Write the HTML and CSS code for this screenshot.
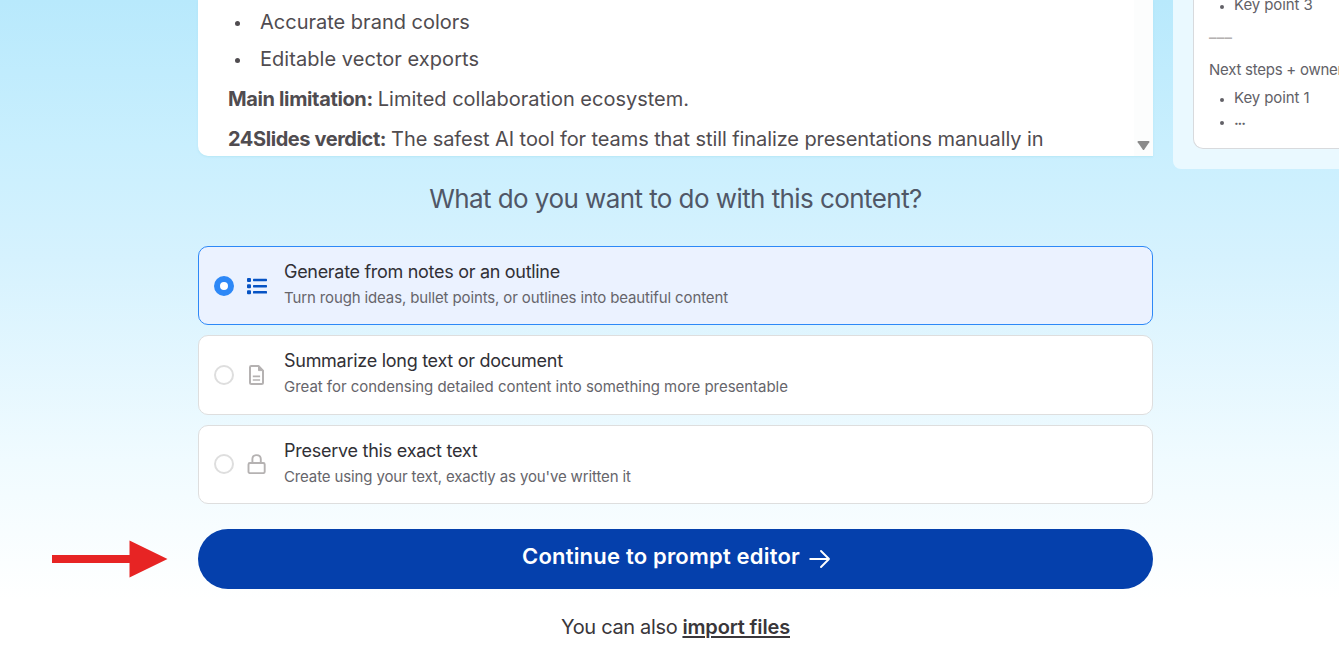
FILE: index.html
```html
<!DOCTYPE html>
<html lang="en">
<head>
<meta charset="utf-8">
<title>Prompt editor</title>
<link rel="stylesheet" href="styles.css">
</head>
<body>
<div class="page">
  <main class="main">
    <section class="editor">
      <div class="editor-text">
        <ul class="points">
          <li>Accurate brand colors</li>
          <li><span class="loose">Editable vector exports</span></li>
        </ul>
        <p><b>Main limitation:</b><span>Limited collaboration ecosystem.</span></p>
        <p class="verdict"><b>24Slides verdict:</b><span>The safest AI tool for teams that still finalize presentations manually in</span></p>
      </div>
      <div class="scrollbar"><svg width="14" height="12" viewBox="0 0 14 12"><path d="M1.500 1h10q1.500 0 .8 1.200L7.300 9.600q-.8 1-1.600 0L.7 2.200Q0 1 1.500 1z" fill="#8b8b8b"/></svg></div>
    </section>
    <h1 class="question">What do you want to do with this content?</h1>
    <div class="options">
      <label class="option selected">
        <span class="radio"></span>
        <svg class="icon" viewBox="0 0 20 20" fill="#0653c4"><rect y="2" width="4" height="4" rx="1"/><rect y="8.200" width="4" height="4" rx="1"/><rect y="14.300" width="4" height="4" rx="1"/><rect x="6" y="2.800" width="14" height="2.400" rx=".6"/><rect x="6" y="9" width="14" height="2.400" rx=".6"/><rect x="6" y="15.100" width="14" height="2.400" rx=".6"/></svg>
        <span class="copy"><span class="title">Generate from notes or an outline</span><span class="desc">Turn rough ideas, bullet points, or outlines into beautiful content</span></span>
      </label>
      <label class="option summarize">
        <span class="radio"></span>
        <svg class="icon" viewBox="0 0 20 20" fill="none" stroke="#b5b2b2" stroke-width="2" stroke-linejoin="round"><path d="M4.300 1H11.500L16 5.600V17.500Q16 19 14.500 19H4.500Q3 19 3 17.500V2.300Q3 1 4.300 1z"/><path d="M11.500 1v4.600H16z" fill="#b5b2b2" stroke-width="1"/><path d="M5.800 11.400h7.300M5.800 15h7.300" stroke-width="1.700"/></svg>
        <span class="copy"><span class="title">Summarize long text or document</span><span class="desc">Great for condensing detailed content into something more presentable</span></span>
      </label>
      <label class="option preserve">
        <span class="radio"></span>
        <svg class="icon" viewBox="0 0 20 20" fill="none" stroke="#b5b2b2" stroke-width="1.900"><rect x="1.500" y="9" width="16.200" height="10.100" rx="1.400"/><path d="M5.400 8.600V5.100Q5.500 1.100 9.600 1.100T13.800 5.100V8.600"/></svg>
        <span class="copy"><span class="title">Preserve this exact text</span><span class="desc">Create using your text, exactly as you've written it</span></span>
      </label>
    </div>
    <div class="cta">
      <svg class="pointer" width="116" height="38" viewBox="0 0 116 38"><path d="M0 15h77.500V.5L115.500 19 77.500 37.500V23H0z" fill="#e72424"/></svg>
      <button class="continue"><span>Continue to prompt editor</span><svg width="22" height="20" viewBox="0 0 22 20" fill="none" stroke="#fff" stroke-width="1.900" stroke-linecap="round" stroke-linejoin="round"><path d="M1.200 10H20M12 2l8 8-8 8"/></svg></button>
    </div>
    <p class="import"><span>You can also</span><a>import files</a></p>
  </main>
  <aside class="side">
    <div class="sample">
      <ul><li>Key point 3</li></ul>
      <p class="dashes">–––</p>
      <p class="next">Next steps + owner</p>
      <ul><li>Key point 1</li><li class="more"><span>...</span></li></ul>
    </div>
  </aside>
</div>
</body>
</html>
```

FILE: styles.css
```css
* { box-sizing: border-box; }
body { margin: 0; overflow: hidden; font-family: Inter, "Liberation Sans", sans-serif; color: #504c50; }
p, h1, ul { margin: 0; padding: 0; }
ul { list-style: none; }
.page { height: 668px; padding-left: 198px; display: flex; gap: 20px; align-items: flex-start; overflow: hidden; background: linear-gradient(#b8e9fc 0, #c9effe 145px, #d6f2fe 260px, #f0fbff 460px, #fff 600px); }
.main { width: 955px; flex: none; }
.editor { height: 156px; display: flex; background: #fff; border-radius: 0 0 0 10px; box-shadow: 0 1px 2px #9edced70; }
.editor-text { flex: 1; padding: 4px 0 0 30px; font-size: 20px; white-space: nowrap; }
.points li { height: 37px; line-height: 37px; padding-left: 7px; display: flex; align-items: center; }
.points li::before { content: ""; width: 5px; height: 5px; border-radius: 50%; background: #504c50; margin: 2px 20px 0 0; }
.loose { letter-spacing: .05px; }
.editor-text p { height: 40px; line-height: 42px; display: flex; gap: 5px; }
.editor-text b { letter-spacing: -.36px; }
.verdict b { letter-spacing: -.42px; }
.verdict span { letter-spacing: -.09px; }
.scrollbar { width: 19px; display: flex; align-items: flex-end; justify-content: center; padding-bottom: 4px; background: #fcfdfd; }
.question { height: 90px; line-height: 86px; text-align: center; font-weight: 400; font-size: 26px; letter-spacing: -.57px; color: #505767; }
.options { display: flex; flex-direction: column; gap: 10px; }
.option { height: 79px; display: flex; align-items: center; padding-left: 15px; background: #fff; border: 1px solid #dedede; border-radius: 10px; white-space: nowrap; }
.option.summarize { height: 80px; padding-bottom: 1px; }
.option.preserve { padding-bottom: 2px; }
.option.selected { background: #ebf2ff; border-color: #2d88f7; }
.radio { width: 20px; height: 20px; border: 2px solid #dedede; border-radius: 50%; }
.selected .radio { border: 6px solid #2d88f7; background: #fff; }
.icon { width: 20px; height: 20px; margin: 0 17px 0 13px; }
.copy { display: flex; flex-direction: column; margin-top: -1px; }
.title { font-size: 18px; line-height: 26px; letter-spacing: -.3px; color: #313036; }
.desc { font-size: 15px; line-height: 26px; letter-spacing: -.13px; color: #66656b; }
.summarize .title { letter-spacing: -.28px; }
.summarize .desc { letter-spacing: -.03px; }
.preserve .title { letter-spacing: -.25px; }
.preserve .desc { line-height: 25px; }
.cta { position: relative; padding-top: 25px; }
.pointer { position: absolute; left: -146px; top: 36px; }
.continue { width: 100%; height: 60px; border: 0; border-radius: 30px; background: #0540ac; color: #fff; font: 600 22px Inter, sans-serif; letter-spacing: .2px; display: flex; align-items: center; justify-content: center; gap: 9px; padding: 0 0 0 2px; white-space: nowrap; }
.continue span { margin-top: -6px; }
.import { display: flex; justify-content: center; gap: 5px; font-size: 20px; line-height: 30px; padding-top: 23px; color: #39363a; }
.import span { letter-spacing: -.33px; }
.import a { font-weight: 600; letter-spacing: -.16px; text-decoration: underline; text-decoration-thickness: 2px; text-underline-offset: 2px; }
.side { width: 166px; height: 169px; flex: none; padding: 0 0 20px 20px; border-radius: 0 0 0 8px; background: #eaf9ff; }
.sample { height: 149px; padding-left: 15px; background: #fff; border: 1px solid #d8dadd; border-width: 0 0 1px 1px; border-radius: 0 0 0 10px; font-size: 15px; letter-spacing: -.1px; color: #626167; white-space: nowrap; }
.sample li { height: 24px; line-height: 24px; display: flex; align-items: center; padding-left: 11px; }
.sample li::before { content: ""; width: 4px; height: 4px; border-radius: 50%; background: #626167; margin: 3px 10px 0 0; }
.sample ul:first-child li { height: 17px; line-height: 18px; padding-bottom: 7px; }
.sample .more { height: 22px; }
.more span { margin-top: -3px; font-weight: 600; letter-spacing: -1.2px; }
.dashes { height: 34px; line-height: 41px; font-weight: 600; color: #b5b1b1; letter-spacing: .3px; }
.next { height: 35px; line-height: 38px; letter-spacing: -.25px; }
```
